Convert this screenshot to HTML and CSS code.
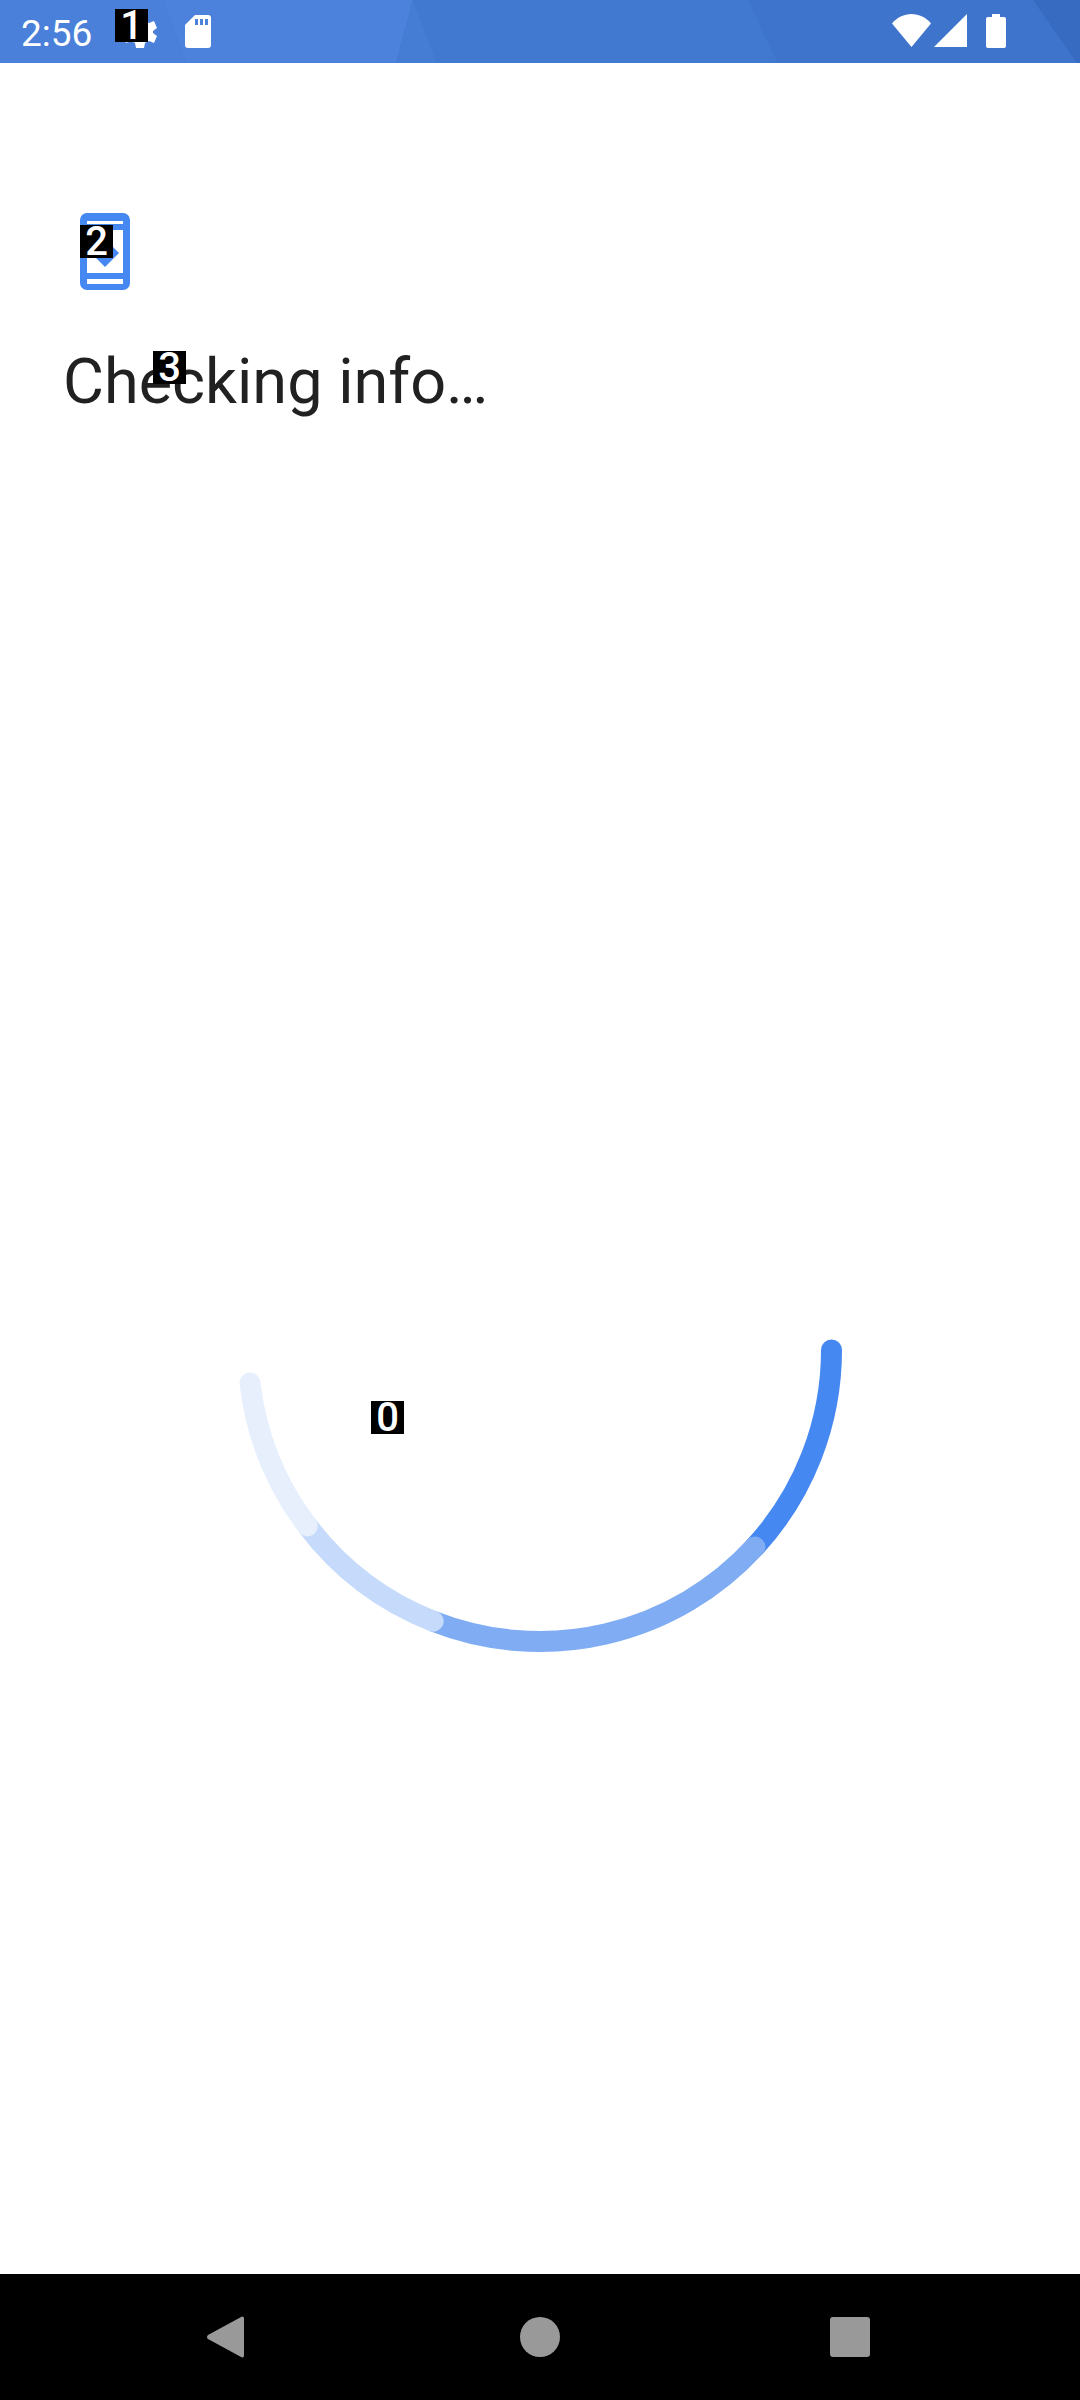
FILE: index.html
```html
<!DOCTYPE html>
<html lang="en">
<head>
    <meta charset="UTF-8">
    <title>Checking info</title>
    <link rel="stylesheet" href="styles.css">
</head>
<body>
    <div class="phone">
        <div class="status-bar">
            <svg class="status-bg" viewBox="0 0 1080 63" preserveAspectRatio="none">
                <polygon class="facet-a" points="0,0 163,0 186,63 0,63"/>
                <polygon class="facet-b" points="163,0 413,0 396,63 186,63"/>
                <polygon class="facet-c" points="413,0 437,63 396,63"/>
                <polygon class="facet-d" points="413,0 748,0 778,63 437,63"/>
                <polygon class="facet-e" points="748,0 1033,0 1077,63 778,63"/>
                <polygon class="facet-f" points="1033,0 1080,0 1080,63 1077,63"/>
            </svg>
            <span class="time">2:56</span>
            <svg class="icon-gear" viewBox="0 0 36 36"><path d="M14 4h8l1 5 4 2 5-2 3 7-4 3v2l4 3-3 7-5-2-4 2-1 5h-8l-1-5-4-2-5 2-3-7 4-3v-2l-4-3 3-7 5 2 4-2z"/></svg>
            <svg class="icon-sd" viewBox="0 0 26 33">
                <path d="M10 0h13a3 3 0 0 1 3 3v27a3 3 0 0 1-3 3H3a3 3 0 0 1-3-3V10z"/>
                <rect class="sd-slot" x="10" y="4" width="3" height="6"/>
                <rect class="sd-slot" x="15" y="4" width="3" height="6"/>
                <rect class="sd-slot" x="20" y="4" width="3" height="6"/>
            </svg>
            <div class="status-right">
                <svg class="icon-wifi" viewBox="0 0 39 33"><path d="M19.5 33 0 9.5C5 3.5 12 0 19.5 0S34 3.5 39 9.5z"/></svg>
                <svg class="icon-signal" viewBox="0 0 33 33"><path d="M33 0v33H0z"/></svg>
                <svg class="icon-battery" viewBox="0 0 20 34"><path d="M6 0h8v3h4a2 2 0 0 1 2 2v27a2 2 0 0 1-2 2H2a2 2 0 0 1-2-2V5a2 2 0 0 1 2-2h4z"/></svg>
            </div>
        </div>

        <main class="content">
            <svg class="device-icon" viewBox="0 0 50 77">
                <path fill-rule="evenodd" d="M7 0h36a7 7 0 0 1 7 7v63a7 7 0 0 1-7 7H7a7 7 0 0 1-7-7V7a7 7 0 0 1 7-7zM7 8v3h36V8zM7 17v43h36V17zM7 66v5h36v-5z"/>
                <path d="M25 54 11 40l14-14 14 14z"/>
            </svg>
            <h1 class="title">Checking info…</h1>

            <svg class="spinner" viewBox="0 0 640 350">
                <path class="arc arc-1" d="M611.5 39A291.5 291.5 0 0 1 534.9 235.9"/>
                <path class="arc arc-2" d="M534.9 235.9A291.5 291.5 0 0 1 213.2 310.2"/>
                <path class="arc arc-3" d="M213.2 310.2A291.5 291.5 0 0 1 87.4 214.9"/>
                <path class="arc arc-4" d="M87.4 214.9A291.5 291.5 0 0 1 30 72"/>
            </svg>
        </main>

        <nav class="nav-bar">
            <svg class="nav-back" viewBox="0 0 37 42"><path d="M35 0.5a2 2 0 0 1 2 1.5v38a2 2 0 0 1-2 1.5L1 23a2.5 2.5 0 0 1 0-4z"/></svg>
            <div class="nav-home"></div>
            <div class="nav-recent"></div>
        </nav>

        <span class="badge badge-0">0</span>
        <span class="badge badge-1">1</span>
        <span class="badge badge-2">2</span>
        <span class="badge badge-3">3</span>
    </div>
</body>
</html>
```

FILE: styles.css
```css
html, body {
    margin: 0;
    padding: 0;
    background-color: #ffffff;
}

.phone {
    position: relative;
    width: 1080px;
    height: 2400px;
    display: flex;
    flex-direction: column;
    overflow: hidden;
    font-family: 'Roboto', sans-serif;
}

/* status bar */
.status-bar {
    position: relative;
    height: 63px;
    flex-shrink: 0;
    display: flex;
    align-items: center;
    padding: 0 74px 0 21px;
    box-sizing: border-box;
    background-color: #3f75cc;
    color: #ffffff;
}

.status-bg {
    position: absolute;
    left: 0;
    top: 0;
    width: 100%;
    height: 100%;
}

.facet-a { fill: #4a80d9; }
.facet-b { fill: #4c82db; }
.facet-c { fill: #467dd4; }
.facet-d { fill: #4179d0; }
.facet-e { fill: #3e74cb; }
.facet-f { fill: #376bc1; }

.time {
    position: relative;
    align-self: flex-start;
    font-size: 37px;
    line-height: 67px;
    width: 73px;
}

.status-bar svg:not(.status-bg) {
    position: relative;
    fill: #ffffff;
}

.icon-gear {
    width: 36px;
    height: 36px;
    margin-left: 28px;
    margin-bottom: 3px;
}

.icon-sd {
    width: 26px;
    height: 33px;
    margin-left: 27px;
}

.status-bar svg .sd-slot {
    fill: #4c82db;
}

.status-right {
    position: relative;
    margin-left: auto;
    margin-bottom: 2px;
    display: flex;
    align-items: center;
    gap: 3px;
}

.icon-wifi {
    width: 39px;
    height: 33px;
}

.icon-signal {
    width: 33px;
    height: 33px;
}

.icon-battery {
    width: 20px;
    height: 34px;
    margin-left: 16px;
}

/* main content */
.content {
    flex: 1;
    padding: 150px 0 0 64px;
    display: flex;
    flex-direction: column;
    align-items: flex-start;
}

.device-icon {
    width: 50px;
    height: 77px;
    margin-left: 16px;
    fill: #4688f1;
}

.title {
    margin: 52px 0 0 -1px;
    font-size: 63px;
    font-weight: 400;
    line-height: 80px;
    color: #212121;
}

.spinner {
    width: 640px;
    height: 350px;
    margin: 889px 0 0 156px;
}

.arc {
    fill: none;
    stroke-width: 21;
    stroke-linecap: round;
}

.arc-1 { stroke: #4688f1; }
.arc-2 { stroke: #7facf3; }
.arc-3 { stroke: #c6dafb; }
.arc-4 { stroke: #e7effd; }

/* nav bar */
.nav-bar {
    height: 126px;
    flex-shrink: 0;
    background-color: #000000;
    display: flex;
    align-items: center;
    padding-left: 207px;
}

.nav-back {
    width: 37px;
    height: 42px;
    fill: #999999;
}

.nav-home {
    width: 40px;
    height: 40px;
    margin-left: 276px;
    border-radius: 50%;
    background-color: #999999;
}

.nav-recent {
    width: 40px;
    height: 40px;
    margin-left: 270px;
    border-radius: 3px;
    background-color: #999999;
}

/* numbered markers */
.badge {
    position: absolute;
    width: 33px;
    height: 33px;
    background-color: #000000;
    color: #ffffff;
    font-size: 40px;
    font-weight: 500;
    line-height: 33px;
    text-align: center;
}

.badge-0 { left: 371px; top: 1401px; }
.badge-1 { left: 115px; top: 9px; }
.badge-2 { left: 80px; top: 225px; }
.badge-3 { left: 153px; top: 351px; }
```
